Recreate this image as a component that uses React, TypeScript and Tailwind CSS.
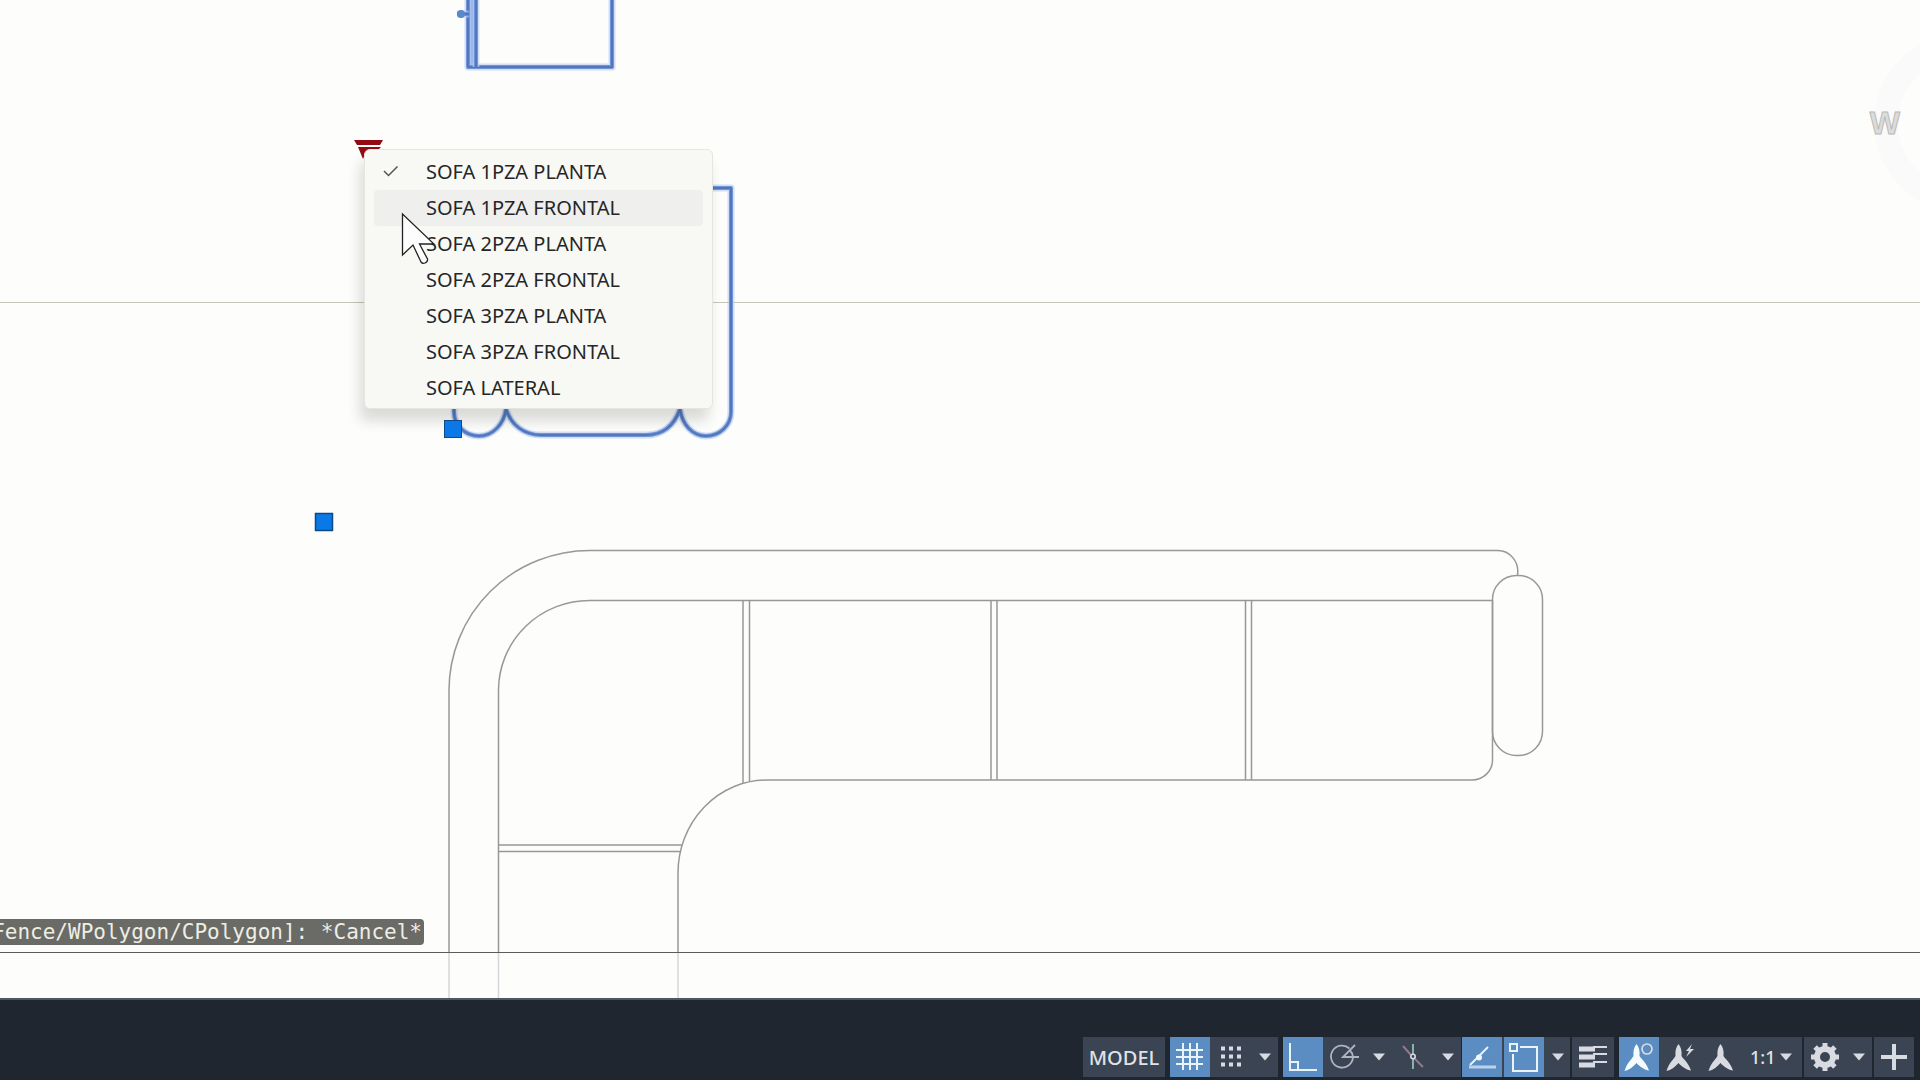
import type { ReactNode } from "react";
import clsx from "clsx";

const visibilityStates = [
  "SOFA 1PZA PLANTA",
  "SOFA 1PZA FRONTAL",
  "SOFA 2PZA PLANTA",
  "SOFA 2PZA FRONTAL",
  "SOFA 3PZA PLANTA",
  "SOFA 3PZA FRONTAL",
  "SOFA LATERAL",
];

const selectedPaths = [
  "M468 -2 V67 H612 V-2",
  "M476 -2 V67",
  "M457 14 H469",
  "M700 188 H731 V412 A25 24 0 0 1 706 436 C692 436 682 424 680 409 C674 426 662 435 646 435 H541 C524 435 511 425 506 409 C504 424 493 436 479 436 A25 24 0 0 1 454 412 V188 H700",
];

const Drawing = () => (
  <svg className="absolute inset-0 h-full w-full" aria-hidden="true">
    {/* View cube ring */}
    <circle cx="1964" cy="123" r="78" fill="none" stroke="#fafafb" strokeWidth="24" />

    <line x1="0" y1="302.5" x2="100%" y2="302.5" stroke="#c6c6b8" />

    {/* Selected blocks */}
    <path d="M468 0 H477 V67 H468 Z" fill="#8fb0e8" />
    <g fill="none" strokeLinejoin="round">
      {selectedPaths.map((d) => (
        <g key={d}>
          <path d={d} stroke="#b5cdf2" strokeWidth="7" opacity="0.6" />
          <path d={d} stroke="#6f96dc" strokeWidth="4" />
          <path d={d} stroke="#5676b8" strokeWidth="2" />
        </g>
      ))}
      <circle cx="461" cy="14" r="4" fill="#5b86d0" />
    </g>

    {/* Corner sofa */}
    <g fill="none" stroke="#989896" strokeWidth="1.5">
      <path d="M449 952 V690 A141 140 0 0 1 590 550.5 H1497 A20 21 0 0 1 1517.5 575" />
      <path d="M498.5 952 V690 A91 90 0 0 1 590 600.5 H1492.5" />
      <path d="M678 952 V873 A89 93 0 0 1 767 780 H1472 A20.5 20 0 0 0 1492.5 760" />
      <path d="M743 600 V783 M749.5 600 V781 M991 600 V780 M997 600 V780 M1245.5 600 V780 M1251.5 600 V780" />
      <path d="M498 845 H682 M498 851.5 H680" />
      <path d="M1492.5 760 V600" />
      <rect x="1492.5" y="575.5" width="50" height="180" rx="24" ry="24" />
      <path d="M449 953 V998 M498.5 953 V998 M678 953 V998" stroke="#d6d6dc" />
    </g>
    <line x1="0" y1="952.5" x2="100%" y2="952.5" stroke="#5c5c5c" />

    {/* Grips */}
    <rect x="315.5" y="513.5" width="17" height="17" fill="#0a78e6" stroke="#0c4a88" strokeWidth="1.5" />
    <path d="M354 140 H383 L380 145 H357 Z M358 147 H381 L379 149 H370 L366 152 L363 159 Z" fill="#930a12" />
  </svg>
);

const Caret = () => (
  <svg className="h-2 w-3" viewBox="0 0 12 8" aria-hidden="true">
    <path d="M0 0.5 H12 L6 7.5 Z" fill="#d8dce2" />
  </svg>
);

const Icon = ({ children }: { children: ReactNode }) => (
  <svg
    className="h-10 w-10"
    viewBox="0 0 40 40"
    fill="none"
    stroke="#d8dce2"
    strokeWidth="2"
    aria-hidden="true"
  >
    {children}
  </svg>
);

const compassBody =
  "M17.5 7 C20 10 21 14 20.5 19 C23 23 27 25 30 33.5 C26 33 21 30 17.5 26 C14 30 10 33 5.5 34 C8 26 12 23 14.5 19 C14 14 15 10 17.5 7 Z";

type BarButtonProps = {
  label: string;
  active?: boolean;
  className?: string;
  children: ReactNode;
};

const BarButton = ({ label, active, className, children }: BarButtonProps) => (
  <button
    type="button"
    aria-label={label}
    aria-pressed={active}
    className={clsx(
      "flex h-10 shrink-0 items-center justify-center",
      active ? "bg-[#5b8dc2]" : "bg-[#3b4453]",
      className ?? "w-10"
    )}
  >
    {children}
  </button>
);

const StatusBar = () => (
  <footer className="flex justify-end border-t-2 border-[#4c5a60] bg-[#1f2630] pt-[37px] pr-[6px] pb-[3px] font-['Noto_Sans',sans-serif] text-[#dfe3e8]">
    <div className="flex">
      <button type="button" className="h-10 w-[82px] bg-[#3b4453] pt-[2px] text-[20px] leading-[38px] font-medium">
        MODEL
      </button>

      <div className="ml-[5px] flex bg-[#3b4453]">
        <BarButton label="Grid" active>
          <Icon>
            <path d="M13 6 V33 M20 6 V33 M27 6 V33 M6 13 H33 M6 20 H33 M6 27 H33" stroke="#e8f4f8" />
          </Icon>
        </BarButton>
        <BarButton label="Snap mode" className="w-[42px]">
          <Icon>
            <path d="M10 11.5 H14 M18 11.5 H22 M26 11.5 H30 M10 19.5 H14 M18 19.5 H22 M26 19.5 H30 M10 27.5 H14 M18 27.5 H22 M26 27.5 H30" strokeWidth="4" />
          </Icon>
        </BarButton>
        <BarButton label="Snap options" className="w-[26px]">
          <Caret />
        </BarButton>
      </div>

      <div className="ml-[5px] flex bg-[#3b4453]">
        <BarButton label="Ortho mode" active>
          <Icon>
            <path d="M7 6 V33 H34 M7 25 H15 V33" stroke="#e8f4f8" />
          </Icon>
        </BarButton>
        <BarButton label="Polar tracking" className="w-[44px]">
          <Icon>
            <path d="M24.5 11.500 A11 11 0 1 0 28 20 M34 20 H18 L30 8 M25 13.500 C27 15.500 28 17.500 28 20" strokeWidth="1.8" stroke="#aeb5bf" />
          </Icon>
        </BarButton>
        <BarButton label="Polar options" className="w-6">
          <Caret />
        </BarButton>
        <BarButton label="Isometric drafting" className="w-[44px]">
          <Icon>
            <path d="M10 9 L18 18" stroke="#94788c" />
            <path d="M21 21 L30 30" stroke="#94788c" />
            <path d="M20 7 V17 M20 22 V32" stroke="#8fb0a8" />
            <circle cx="20" cy="19.500" r="2.2" strokeWidth="1.6" />
          </Icon>
        </BarButton>
        <BarButton label="Isometric options" className="w-[26px]">
          <Caret />
        </BarButton>
      </div>

      <div className="ml-px flex gap-[2px] bg-[#3b4453]">
        <BarButton label="Object snap tracking" active>
          <Icon>
            <path d="M26 10 L8 28" stroke="#e8f4f8" />
            <path d="M7 30 H34" stroke="#b9d3ea" strokeWidth="3" />
            <circle cx="17" cy="20.500" r="3" fill="#eef6fa" stroke="none" />
          </Icon>
        </BarButton>
        <BarButton label="Object snap" active>
          <Icon>
            <path d="M16 10 H33 V34 H9 V17" stroke="#e8f4f8" />
            <rect x="6" y="7" width="7" height="7" stroke="#e8f4f8" />
          </Icon>
        </BarButton>
        <BarButton label="Object snap options" className="w-6">
          <Caret />
        </BarButton>
      </div>

      <BarButton label="Lineweight" className="ml-[2px] w-[42px]">
        <Icon>
          <path d="M20 10 H34 M20 17 H34 M20 25 H34" />
          <path d="M6 12 H22 M6 20 H22 M6 28 H22" strokeWidth="5" />
        </Icon>
      </BarButton>

      <div className="ml-[5px] flex bg-[#3b4453]">
        <BarButton label="Show annotation objects" active>
          <Icon>
            <path d={compassBody} fill="#f4fbff" stroke="none" />
            <circle cx="28" cy="12" r="5" strokeWidth="1.7" />
          </Icon>
        </BarButton>
        <BarButton label="Add scales automatically" className="w-[43px]">
          <Icon>
            <path d={compassBody} fill="#d8dce2" stroke="none" />
            <path d="M31 7 L25 14 H28 L25 20 L33 12 H29 Z" fill="#d8dce2" stroke="none" />
          </Icon>
        </BarButton>
        <BarButton label="Annotation scale icon" className="w-[42px]">
          <Icon>
            <path d={compassBody} fill="#d8dce2" stroke="none" />
          </Icon>
        </BarButton>
        <button type="button" className="flex h-10 w-[58px] items-center gap-1 bg-[#3b4453] pl-[6px] text-[18px] font-medium">
          1:1
          <Caret />
        </button>
      </div>

      <div className="ml-[2px] flex bg-[#3b4453]">
        <BarButton label="Workspace switching" className="w-[42px]">
          <Icon>
            <circle cx="20" cy="20" r="8" strokeWidth="6" />
            <path d="M20 6 V10 M20 30 V34 M6 20 H10 M30 20 H34 M10.1 10.1 L13 13 M27 27 L29.9 29.9 M10.1 29.9 L13 27 M27 13 L29.9 10.1" strokeWidth="5" />
          </Icon>
        </BarButton>
        <BarButton label="Workspace options" className="w-[26px]">
          <Caret />
        </BarButton>
      </div>

      <BarButton label="Annotation monitor" className="ml-[2px] w-10">
        <Icon>
          <path d="M20 7 V33 M7 20 H33" strokeWidth="4" />
        </Icon>
      </BarButton>
    </div>
  </footer>
);

const VisibilityMenu = () => (
  <ul
    role="menu"
    className="absolute top-[149px] left-[364px] w-[349px] rounded-md border border-[#e6e6e0] bg-[#f8f8f5] px-[9px] pt-1 pb-[2px] font-['Noto_Sans',sans-serif] text-[20px] text-[#262626] shadow-[-4px_12px_14px_rgba(0,0,0,0.14)]"
  >
    {visibilityStates.map((name, i) => (
      <li key={name} role="none">
        <button
          type="button"
          role="menuitemradio"
          aria-checked={i === 0}
          className={clsx(
            "flex h-9 w-full items-center rounded text-left leading-[36px]",
            i === 1 && "bg-[#efefed]"
          )}
        >
          <span className="flex w-[52px] shrink-0 pl-[9px]">
            {i === 0 && (
              <svg className="h-4 w-4" viewBox="0 0 16 16" fill="none" stroke="#555" strokeWidth="1.5" aria-hidden="true">
                <path d="M1 7 L5.5 11.500 L14.5 2.500" />
              </svg>
            )}
          </span>
          {name}
        </button>
      </li>
    ))}
  </ul>
);

const App = () => {
  return (
    <div className="flex min-h-screen flex-col overflow-hidden bg-[#fdfdfb]">
      <main className="relative flex-1">
        <Drawing />

        <VisibilityMenu />

        {/* Grip over the menu shadow */}
        <div className="absolute top-[420px] left-[444px] h-[18px] w-[18px] border border-[#0c4a88] bg-[#0a78e6]" />

        {/* Cursor */}
        <svg className="absolute top-[212px] left-[401px] h-[54px] w-[36px]" viewBox="0 0 36 54" aria-hidden="true">
          <path
            d="M1.5 2 V43 L12 33 L20 50 Q21.500 52 24 51 Q27 50 26.500 47 L18.500 32 H33 Z"
            fill="#fdfdfd"
            stroke="#222"
            strokeWidth="1.3"
          />
        </svg>

        {/* View cube label */}
        <span className="absolute top-[108px] right-[20px] font-['Liberation_Sans',sans-serif] text-[32px] leading-[30px] font-bold text-[#dcdcda] [-webkit-text-stroke:1px_#b9b9b9]">
          W
        </span>

        {/* Command history */}
        <output className="absolute bottom-[53px] left-0 flex h-[26px] w-[424px] items-center justify-end overflow-hidden rounded-r bg-[#6a6a66] pt-[2px] pr-[2px] font-['DejaVu_Sans_Mono',monospace] text-[21px] whitespace-pre text-[#eeeee4]">
          Fence/WPolygon/CPolygon]: *Cancel*
        </output>
      </main>

      <StatusBar />
    </div>
  );
};

export default App;
